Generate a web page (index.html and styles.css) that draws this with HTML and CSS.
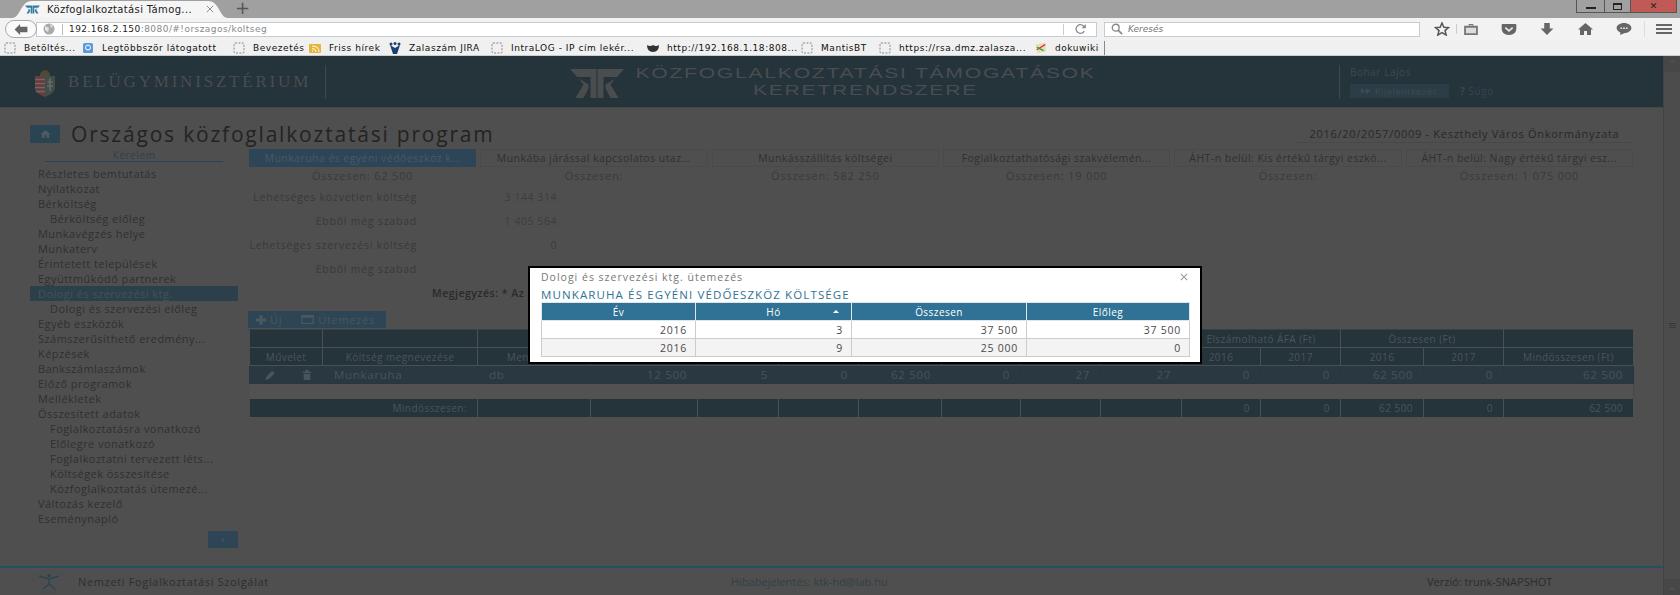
FILE: index.html
```html
<!DOCTYPE html>
<html lang="hu">
<head>
<meta charset="utf-8">
<title>Közfoglalkoztatási Támogatások</title>
<link rel="stylesheet" href="styles.css">
</head>
<body>
<svg class="defs" width="0" height="0" aria-hidden="true">
  <symbol id="kk" viewBox="0 0 54 29">
    <path d="M0 0H26.500V29H20.500V8H7Z"/><path d="M54 0H27.500V29H33.500V8H47Z"/>
    <path d="M9 9.500L18.500 15.500V19.500L13.500 29H5.500L13.500 15.500Z"/><path d="M45 9.500L35.500 15.500V19.500L40.500 29H48.500L40.500 15.500Z"/>
  </symbol>
  <symbol id="ph" viewBox="0 0 12 12">
    <rect x="1" y="1" width="10" height="10" rx="1" fill="none" stroke="#888" stroke-dasharray="2 1.4"/>
  </symbol>
</svg>

<div class="tabbar">
  <div class="tab">
    <svg class="fav"><use href="#kk"/></svg>
    <span class="tab-title">Közfoglalkoztatási Támog...</span>
    <svg class="tab-x" viewBox="0 0 10 10"><path d="M1 1L9 9M9 1L1 9" stroke="#777" fill="none"/></svg>
  </div>
  <span class="newtab">+</span>
  <div class="winbtns">
    <span class="winbtn win-min"><i></i></span>
    <span class="winbtn win-max"><i></i></span>
    <span class="winbtn win-close">✕</span>
  </div>
</div>

<div class="navbar">
  <span class="back">
    <svg viewBox="0 0 14 12" width="14" height="11"><path d="M0 6L6 0V3H14V9H6V12Z" fill="#666"/></svg>
  </span>
  <div class="urlbox">
    <svg class="globe" viewBox="0 0 12 12" width="12" height="12"><circle cx="6" cy="6" r="5.5" fill="#aaa"/><path d="M2 3L6 5L5 9L2 7ZM7 1L10 3L8 5Z" fill="#e4e4e4"/></svg>
    <span class="urlsep"></span>
    <span class="url"><b>192.168.2.150</b>:8080/#!orszagos/koltseg</span>
    <span class="reload">
      <svg viewBox="0 0 14 12" width="12" height="10"><path d="M12 3.5A5.2 5.2 0 1 0 12 8.5" fill="none" stroke="#888" stroke-width="1.5"/><path d="M14 0V5H9Z" fill="#888"/></svg>
    </span>
  </div>
  <div class="searchbox">
    <svg viewBox="0 0 14 14" width="12" height="12"><circle cx="5.5" cy="5.5" r="4" fill="none" stroke="#888" stroke-width="1.6"/><path d="M8.5 8.5L13 13" stroke="#888" stroke-width="2"/></svg>
    <span>Keresés</span>
  </div>
  <div class="navicons">
    <svg class="ni-star" viewBox="0 0 16 15" width="16" height="14"><path d="M8 1L10 5.700L15 6L11.200 9.200L12.500 14L8 11.300L3.500 14L4.800 9.200L1 6L6 5.700Z" fill="none" stroke="#555" stroke-width="1.600"/></svg>
    <span class="ni-sep"></span>
    <svg class="ni-case" viewBox="0 0 15 12" width="14" height="11"><path d="M0 2H5V0H10V2H15V12H0Z" fill="#777"/><path d="M6 1H9V2H6ZM2 4H13V10H2Z" fill="#ddd"/></svg>
    <svg class="ni-pocket" viewBox="0 0 16 12" width="16" height="11"><path d="M1 0H15Q16 0 16 1V5Q16 12 8 12Q0 12 0 5V1Q0 0 1 0Z" fill="#666"/><path d="M4 4L8 7.500L12 4" fill="none" stroke="#eee" stroke-width="1.800"/></svg>
    <svg class="ni-down" viewBox="0 0 14 13" width="14" height="12"><path d="M4 0H10V6H14L7 13L0 6H4Z" fill="#666"/></svg>
    <svg class="ni-home" viewBox="0 0 15 12" width="15" height="12"><path d="M7.500 0L15 6.500H13V12H9V8H6V12H2V6.500H0Z" fill="#666"/></svg>
    <svg class="ni-chat" viewBox="0 0 16 13" width="16" height="12"><path d="M8 0C12.500 0 16 2.500 16 5.500S12.500 11 8 11L4 13V10.300C1.600 9.300 0 7.500 0 5.500C0 2.500 3.500 0 8 0Z" fill="#666"/><path d="M4 5H6V6.500H4ZM7 5H9V6.500H7ZM10 5H12V6.500H10Z" fill="#ddd"/></svg>
    <span class="ni-sep2"></span>
    <span class="burger"><i></i><i></i><i></i></span>
  </div>
</div>

<div class="bookmarks">
  <span class="bm bm1"><svg class="bi"><use href="#ph"/></svg>Betöltés...</span>
  <span class="bm bm2"><svg class="bi" viewBox="0 0 12 12"><rect x="1" y="1" width="10" height="10" rx="1.500" fill="#5b9bd8"/><circle cx="6" cy="5.500" r="2.500" fill="none" stroke="#fff"/></svg>Legtöbbször látogatott</span>
  <span class="bm bm3"><svg class="bi"><use href="#ph"/></svg>Bevezetés</span>
  <span class="bm bm4"><svg class="bi" viewBox="0 0 12 12"><rect y="2" width="12" height="9" rx="1" fill="#e8b53c"/><path d="M3 9h1M3 6.500Q7 6.500 7 10M3 4Q10 4 10 10" fill="none" stroke="#fff"/></svg>Friss hírek</span>
  <span class="bm bm5"><svg class="bi" viewBox="0 0 12 12"><circle cx="2" cy="2" r="1.500" fill="#1d3f6e"/><circle cx="10" cy="2" r="1.500" fill="#1d3f6e"/><circle cx="6" cy="1.500" r="1.500" fill="#1d3f6e"/><path d="M1 3L6 6L11 3L8 12H4Z" fill="#1d3f6e"/></svg>Zalaszám JIRA</span>
  <span class="bm bm6"><svg class="bi"><use href="#ph"/></svg>IntraLOG - IP cím lekér...</span>
  <span class="bm bm7"><svg class="bi" viewBox="0 0 12 12"><path d="M0 3Q3 5 6 3Q9 5 12 3Q12 10 6 10Q0 10 0 3Z" fill="#333"/></svg>http://192.168.1.18:808...</span>
  <span class="bm bm8"><svg class="bi"><use href="#ph"/></svg>MantisBT</span>
  <span class="bm bm9"><svg class="bi"><use href="#ph"/></svg>https://rsa.dmz.zalasza...</span>
  <span class="bm bm10"><svg class="bi" viewBox="0 0 14 12"><path d="M1 2L12 0L13 10L3 12Z" fill="#e6dcb8"/><path d="M2 8L12 2" stroke="#d24" stroke-width="1.500"/><path d="M2 5L10 9" stroke="#3a3" stroke-width="1.500"/></svg>dokuwiki</span>
  <span class="bm-end"></span>
</div>

<div class="page">
  <div class="content">
    <header class="topbar">
      <div class="ministry">
        <svg class="crest" viewBox="0 0 22 30" width="22" height="30">
          <path d="M6 7Q11 -1 16 7V9H6Z" fill="#4d4a36"/>
          <path d="M1 9H21V21Q21 26 11 30Q1 26 1 21Z" fill="#3f4f48"/>
          <path d="M1 9H11V30Q1 26 1 21Z" fill="#6b3a3a"/>
          <path d="M1 12.500H11M1 16.500H11M1 20.500H11M2 24.500H11" stroke="#6a6a6a" stroke-width="1.600"/>
          <path d="M16 11V24M13.500 15H18.500M13 19H19" stroke="#6a6a6a" stroke-width="1.500"/>
        </svg>
        <span class="ministry-name">BELÜGYMINISZTÉRIUM</span>
      </div>
      <div class="app">
        <svg class="app-logo"><use href="#kk"/></svg>
        <div class="app-name"><span>KÖZFOGLALKOZTATÁSI TÁMOGATÁSOK</span><span>KERETRENDSZERE</span></div>
      </div>
      <div class="user">
        <div class="user-name">Bohar Lajos</div>
        <div class="user-actions">
          <span class="logout"><svg viewBox="0 0 12 8" width="9" height="6"><path d="M0 1H3V7H0ZM4 3H7V0L12 4L7 8V5H4Z" fill="#3f4d55"/></svg>Kijelentkezés</span>
          <span class="help"><b>?</b> Súgó</span>
        </div>
      </div>
    </header>

    <main class="main">
      <div class="titlerow">
        <span class="homebtn"><svg viewBox="0 0 15 12" width="11" height="8"><path d="M7.500 0L15 6.500H13V12H9V8H6V12H2V6.500H0Z" fill="#4f5b62"/></svg></span>
        <h1 class="title">Országos közfoglalkoztatási program</h1>
        <div class="applicant">2016/20/2057/0009 - Keszthely Város Önkormányzata</div>
      </div>
      <div class="columns">
        <nav class="sidebar">
          <div class="side-head">Kérelem</div>
          <a class="mi">Részletes bemtutatás</a>
          <a class="mi">Nyilatkozat</a>
          <a class="mi">Bérköltség</a>
          <a class="mi sub">Bérköltség előleg</a>
          <a class="mi">Munkavégzés helye</a>
          <a class="mi">Munkaterv</a>
          <a class="mi">Érintetett települések</a>
          <a class="mi">Együttműködő partnerek</a>
          <a class="mi active">Dologi és szervezési ktg.</a>
          <a class="mi sub">Dologi és szervezési előleg</a>
          <a class="mi">Egyéb eszközök</a>
          <a class="mi">Számszerűsíthető eredmény...</a>
          <a class="mi">Képzések</a>
          <a class="mi">Bankszámlaszámok</a>
          <a class="mi">Előző programok</a>
          <a class="mi">Mellékletek</a>
          <a class="mi">Összesített adatok</a>
          <a class="mi sub">Foglalkoztatásra vonatkozó</a>
          <a class="mi sub">Előlegre vonatkozó</a>
          <a class="mi sub">Foglalkoztatni tervezett léts...</a>
          <a class="mi sub">Költségek összesítése</a>
          <a class="mi sub">Közfoglalkoztatás ütemezé...</a>
          <a class="mi">Változás kezelő</a>
          <a class="mi">Eseménynapló</a>
          <div class="collapse-row"><span class="collapse">‹</span></div>
        </nav>
        <section class="panel">
          <div class="cost-tabs">
            <div class="cost-tab"><span class="ct ct-on">Munkaruha és egyéni védőeszköz k...</span><span class="sum">Összesen: 62 500</span></div>
            <div class="cost-tab"><span class="ct">Munkába járással kapcsolatos utaz...</span><span class="sum">Összesen:</span></div>
            <div class="cost-tab"><span class="ct">Munkásszállítás költségei</span><span class="sum">Összesen: 582 250</span></div>
            <div class="cost-tab"><span class="ct">Foglalkoztathatósági szakvélemén...</span><span class="sum">Összesen: 19 000</span></div>
            <div class="cost-tab"><span class="ct">ÁHT-n belül: Kis értékű tárgyi eszkö...</span><span class="sum">Összesen:</span></div>
            <div class="cost-tab"><span class="ct">ÁHT-n belül: Nagy értékű tárgyi esz...</span><span class="sum">Összesen: 1 075 000</span></div>
          </div>
          <div class="frow"><span class="flabel">Lehetséges közvetlen költség</span><span class="fval">3 144 314</span></div>
          <div class="frow"><span class="flabel">Ebből még szabad</span><span class="fval">1 405 564</span></div>
          <div class="frow"><span class="flabel">Lehetséges szervezési költség</span><span class="fval">0</span></div>
          <div class="frow"><span class="flabel">Ebből még szabad</span><span class="fval"></span></div>
          <div class="note">Megjegyzés: * Az</div>
          <div class="toolbar">
            <span class="tool"><svg viewBox="0 0 10 10" width="10" height="10"><path d="M3.500 0H6.500V3.500H10V6.500H6.500V10H3.500V6.500H0V3.500H3.500Z" fill="#4a5860"/></svg>Új</span>
            <span class="tool"><svg viewBox="0 0 14 10" width="13" height="9"><path d="M0 0H14V10H0ZM1.500 3V8.500H12.500V3Z" fill="#4a5860" fill-rule="evenodd"/></svg>Ütemezés</span>
          </div>
          <table class="grid">
            <colgroup>
              <col class="w73"><col class="w155"><col class="w113"><col class="w107"><col class="w81"><col class="w80"><col class="w83"><col class="w79"><col class="w80"><col class="w81"><col class="w79"><col class="w80"><col class="w83"><col class="w80"><col class="w130">
            </colgroup>
            <thead>
              <tr class="h18"><th></th><th></th><th></th><th></th><th></th><th></th><th></th><th></th><th></th><th></th><th colspan="2">Elszámolható ÁFA (Ft)</th><th colspan="2">Összesen (Ft)</th><th></th></tr>
              <tr class="h18"><th>Művelet</th><th>Költség megnevezése</th><th>Mennyiség</th><th></th><th></th><th></th><th></th><th></th><th></th><th></th><th>2016</th><th>2017</th><th>2016</th><th>2017</th><th>Mindösszesen (Ft)</th></tr>
            </thead>
            <tbody>
              <tr class="datarow">
                <td class="ops"><span class="ops-in">
                  <svg viewBox="0 0 12 12" width="11" height="10"><path d="M0 12L1 8L8 1L11 4L4 11Z" fill="#465660"/></svg>
                  <svg viewBox="0 0 10 12" width="10" height="10"><path d="M0 2H3V0H7V2H10V3.500H0ZM1 4.500H9V12H1Z" fill="#465660"/></svg>
                </span></td>
                <td class="tl">Munkaruha</td><td class="tl">db</td><td>12 500</td><td>5</td><td>0</td><td>62 500</td><td>0</td><td>27</td><td>27</td><td>0</td><td>0</td><td>62 500</td><td>0</td><td>62 500</td>
              </tr>
              <tr class="emptyrow"><td colspan="15"></td></tr>
              <tr class="totalrow"><td colspan="2">Mindösszesen:</td><td></td><td></td><td></td><td></td><td></td><td></td><td></td><td></td><td>0</td><td>0</td><td>62 500</td><td>0</td><td>62 500</td></tr>
            </tbody>
          </table>
        </section>
      </div>
    </main>

    <footer class="footer">
      <div class="foot-left">
        <svg class="nfsz" viewBox="0 0 36 24" width="36" height="24">
          <ellipse cx="18" cy="10.500" rx="17" ry="10" fill="none" stroke="#454f54" stroke-dasharray="1.500 1"/>
          <path d="M8 6L18 9L28 6M18 9V14L12 19M18 14L24 19" fill="none" stroke="#2a4452" stroke-width="1.500"/>
          <circle cx="18" cy="5.500" r="1.800" fill="#2a4452"/>
          <text x="18" y="23.500" class="nfsz-t">NFSZ</text>
        </svg>
        <span>Nemzeti Foglalkoztatási Szolgálat</span>
      </div>
      <a class="foot-mid">Hibabejelentés: ktk-hd@lab.hu</a>
      <span class="foot-right">Verzió: trunk-SNAPSHOT</span>
    </footer>
  </div>

  <div class="scrollbar">
    <span class="sb-btn">⌃</span>
    <span class="sb-track"><i class="sb-grip"></i></span>
    <span class="sb-btn">⌄</span>
  </div>

  <div class="modal">
    <div class="modal-head"><span>Dologi és szervezési ktg. ütemezés</span><svg viewBox="0 0 10 10" width="8" height="8"><path d="M1 1L9 9M9 1L1 9" stroke="#999" stroke-width="1.300" fill="none"/></svg></div>
    <div class="modal-sub">MUNKARUHA ÉS EGYÉNI VÉDŐESZKÖZ KÖLTSÉGE</div>
    <table class="mtable">
      <colgroup><col class="m1"><col class="m2"><col class="m3"><col class="m4"></colgroup>
      <thead><tr><th>Év</th><th class="sorted">Hó<i class="caret"></i></th><th>Összesen</th><th>Előleg</th></tr></thead>
      <tbody>
        <tr><td>2016</td><td>3</td><td>37 500</td><td>37 500</td></tr>
        <tr class="alt"><td>2016</td><td>9</td><td>25 000</td><td>0</td></tr>
      </tbody>
    </table>
  </div>
</div>
</body>
</html>
```

FILE: styles.css
```css
* { box-sizing: border-box; }
html, body { margin: 0; padding: 0; }
body {
  width: 1680px;
  height: 595px;
  overflow: hidden;
  display: flex;
  flex-direction: column;
  font-family: "Open Sans", "Liberation Sans", sans-serif;
  background: #4f4f4f;
}
.defs { position: absolute; }

/* browser chrome */
.tabbar {
  height: 18px;
  flex: none;
  background: #a0a0a0;
  display: flex;
  align-items: flex-end;
  padding-left: 12px;
}
.tab {
  width: 216px;
  height: 18px;
  background: #f5f5f5;
  clip-path: path("M0 18C9 18 8 1 20 1L196 1C208 1 207 18 216 18Z");
  display: flex;
  align-items: center;
  padding-left: 13px;
  font: 10px "DejaVu Sans", sans-serif;
  color: #222;
}
.fav { width: 15px; height: 9px; fill: #2f7ca0; flex: none; }
.tab-title { margin-left: 7px; width: 152px; letter-spacing: .35px; white-space: nowrap; overflow: hidden; }
.tab-x { width: 8px; height: 8px; margin-left: 7px; }
.newtab { margin: 0 0 1px 7px; font: 18px/18px "DejaVu Sans", sans-serif; color: #555; }
.winbtns { margin-left: auto; margin-right: 3px; height: 13px; align-self: flex-start; display: flex; border: 1px solid #555; border-top: 0; }
.winbtn { display: flex; align-items: center; justify-content: center; height: 12px; border-right: 1px solid #555; }
.win-min { width: 28px; }
.win-min i { width: 10px; height: 2px; background: #222; margin-top: 4px; }
.win-max { width: 26px; }
.win-max i { width: 9px; height: 7px; border: 1px solid #222; border-top-width: 2px; }
.win-close { width: 45px; border-right: 0; background: #bf5a56; color: #222; font: bold 9px "DejaVu Sans", sans-serif; }

.navbar {
  height: 22px;
  flex: none;
  background: #f2f2f2;
  display: flex;
  align-items: center;
  padding-left: 5px;
  font: 9px "DejaVu Sans", sans-serif;
}
.back {
  width: 32px;
  height: 18px;
  border: 1px solid #aaa;
  border-radius: 10px;
  background: #fafafa;
  display: flex;
  align-items: center;
  justify-content: center;
  flex: none;
  position: relative;
  z-index: 1;
}
.urlbox {
  width: 1061px;
  height: 15px;
  margin-left: -1px;
  background: #fff;
  border: 1px solid #c5cdd4;
  display: flex;
  align-items: center;
  padding-left: 6px;
  flex: none;
}
.urlsep { width: 1px; height: 11px; background: #bbb; margin: 0 6px 0 7px; }
.url { color: #888; letter-spacing: .45px; }
.url b { color: #222; font-weight: 400; }
.reload { margin-left: auto; width: 33px; height: 11px; border-left: 1px solid #ccc; display: flex; align-items: center; justify-content: center; }
.searchbox {
  width: 316px;
  height: 15px;
  margin-left: 7px;
  background: #fff;
  border: 1px solid #c5cdd4;
  display: flex;
  align-items: center;
  gap: 5px;
  padding-left: 6px;
  color: #777;
  font-style: italic;
  flex: none;
}
.navicons { display: flex; align-items: center; flex: 1; padding-left: 14px; position: relative; }
.ni-sep { width: 1px; height: 10px; background: #ccc; margin: 0 7px 0 6px; }
.ni-pocket { margin-left: 23px; }
.ni-down { margin-left: 23px; }
.ni-home { margin-left: 24px; }
.ni-chat { margin-left: 23px; }
.ni-sep2 { width: 1px; height: 16px; background: #ddd; margin: 0 11px 0 12px; }
.burger { display: flex; flex-direction: column; gap: 2px; width: 16px; }
.burger i { height: 2px; background: #666; }

.bookmarks {
  height: 16px;
  flex: none;
  background: #f0f0f0;
  border-bottom: 1px solid #ccc;
  display: flex;
  align-items: center;
  font: 9px "DejaVu Sans", sans-serif;
  color: #111;
  letter-spacing: .55px;
  padding-left: 4px;
}
.bm { display: flex; align-items: center; gap: 8px; white-space: nowrap; flex: none; }
.bi { width: 12px; height: 12px; flex: none; }
.bm1 { width: 78px; }
.bm2 { width: 151px; }
.bm3 { width: 76px; }
.bm4 { width: 80px; }
.bm5 { width: 102px; }
.bm6 { width: 156px; }
.bm7 { width: 154px; }
.bm8 { width: 78px; }
.bm9 { width: 156px; }
.bm10 { width: 69px; }
.bm-end { width: 1px; height: 14px; background: #888; }

/* page, already dimmed by the modal backdrop */
.page {
  flex: 1;
  min-height: 0;
  display: flex;
  position: relative;
  background: #4f4f4f;
}
.content { width: 1663px; flex: none; display: flex; flex-direction: column; }

.topbar {
  height: 52px;
  flex: none;
  background: #25333b;
  border-bottom: 1px solid #46484a;
  display: flex;
  align-items: flex-start;
  padding: 9px 0 0 34px;
  position: relative;
}
.ministry {
  width: 292px;
  height: 34px;
  border-right: 1px solid #40484c;
  display: flex;
  align-items: center;
  flex: none;
}
.crest { flex: none; }
.ministry-name {
  margin-left: 12px;
  font: 17px "Liberation Serif", serif;
  letter-spacing: 2.8px;
  color: #4a4d4e;
  white-space: nowrap;
}
.app { width: 1013px; flex: none; display: flex; padding-left: 244px; align-items: center; }
.app-logo { width: 54px; height: 29px; fill: #4a4d4e; flex: none; margin: 3px 10px 0 0; }
.app-name {
  width: 463px;
  display: flex;
  flex-direction: column;
  align-items: center;
  font: 14.800px/17px "Liberation Sans", sans-serif;
  letter-spacing: 1.2px;
  color: #4a4d4e;
  white-space: nowrap;
  transform: scaleX(1.43);
}
.user {
  height: 34px;
  border-left: 1px solid #3d474c;
  padding-left: 10px;
  flex: 1;
  font-size: 10px;
  color: #3d4a52;
  letter-spacing: .55px;
}
.user-name { height: 19px; line-height: 14px; }
.user-actions { display: flex; align-items: center; gap: 11px; }
.logout {
  width: 99px;
  height: 14px;
  background: #2c3d47;
  display: flex;
  align-items: center;
  gap: 5px;
  padding-left: 11px;
  font-size: 9px;
  letter-spacing: .6px;
}
.help { color: #37464e; }

.main { flex: 1; padding: 17px 30px 0 30px; min-height: 0; }
.titlerow { display: flex; align-items: center; height: 18px; margin-bottom: 6px; }
.homebtn {
  width: 30px;
  height: 18px;
  background: #2b4453;
  display: flex;
  align-items: center;
  justify-content: center;
  flex: none;
}
.title {
  margin: 0 0 0 11px;
  font-size: 21px;
  font-weight: 400;
  line-height: 18px;
  letter-spacing: 1.8px;
  color: #232323;
  white-space: nowrap;
}
.applicant {
  margin-left: auto;
  width: 337px;
  height: 18px;
  border-bottom: 1px solid #484848;
  text-align: center;
  font-size: 11px;
  line-height: 18px;
  letter-spacing: .72px;
  color: #282828;
  white-space: nowrap;
}
.columns { display: flex; gap: 11px; }

.sidebar { width: 208px; flex: none; font-size: 11px; letter-spacing: .45px; color: #303030; }
.side-head {
  width: 178px;
  margin: 0 0 4px 15px;
  height: 13px;
  line-height: 13px;
  border-bottom: 1px solid #2c4452;
  text-align: center;
  font-size: 10px;
  letter-spacing: .6px;
  color: #2b4150;
}
.mi { display: block; height: 15px; line-height: 15px; padding-left: 8px; white-space: nowrap; }
.mi.sub { padding-left: 20px; }
.mi.active { background: #2c404b; color: #435259; }
.collapse-row { display: flex; justify-content: flex-end; margin-top: 5px; }
.collapse {
  width: 30px;
  height: 17px;
  background: #2d4554;
  color: #4f5f68;
  text-align: center;
  line-height: 17px;
  font-size: 10px;
}

.panel { width: 1384px; flex: none; font-size: 11px; letter-spacing: .4px; color: #333; }
.cost-tabs { display: flex; gap: 4px; height: 36px; }
.cost-tab { flex: 1; min-width: 0; display: flex; flex-direction: column; align-items: center; }
.ct {
  width: 100%;
  height: 18px;
  line-height: 17px;
  border: 1px solid #4a4a4a;
  text-align: center;
  font-size: 10.500px;
  letter-spacing: .45px;
  color: #303030;
  white-space: nowrap;
  overflow: hidden;
}
.ct-on { background: #2c4657; border-color: #2c4657; color: #485a64; }
.sum { height: 18px; line-height: 18px; font-size: 11px; letter-spacing: .8px; color: #3a3a3a; white-space: nowrap; }
.frow { display: flex; height: 24px; align-items: center; color: #393939; }
.flabel { width: 168px; text-align: right; white-space: nowrap; flex: none; font-size: 10.500px; letter-spacing: .78px; }
.fval { width: 140px; text-align: right; flex: none; font-size: 10.500px; color: #3d3d3d; letter-spacing: .55px; }
.note { height: 24px; line-height: 24px; padding-left: 183px; font-weight: 600; font-size: 10.500px; letter-spacing: .5px; color: #2a2a2a; }
.toolbar {
  width: 138px;
  height: 17px;
  margin: 6px 0 1px -1px;
  background: #2e4555;
  display: flex;
  align-items: center;
  gap: 19px;
  padding-left: 8px;
  color: #475761;
  font-size: 11px;
  letter-spacing: .7px;
}
.tool { display: flex; align-items: center; gap: 4px; }

.grid { table-layout: fixed; width: 1384px; border-collapse: collapse; font-size: 10px; letter-spacing: .45px; }
.w73 { width: 73px; } .w155 { width: 155px; } .w113 { width: 113px; } .w107 { width: 107px; }
.w81 { width: 81px; } .w80 { width: 80px; } .w83 { width: 83px; } .w79 { width: 79px; } .w130 { width: 130px; }
.grid th {
  background: #25333b;
  border: 1px solid #4b4f51;
  border-top: 1px solid #33414a;
  color: #4b5559;
  font-weight: 400;
  text-align: center;
  padding: 0;
  line-height: 12px;
  white-space: nowrap;
  overflow: hidden;
}
.h18 { height: 18px; }
.grid td { padding: 0 10px 0 0; text-align: right; line-height: 12px; white-space: nowrap; overflow: hidden; }
.datarow { height: 18px; background: #2a3941; color: #46545b; font-size: 11.500px; letter-spacing: .7px; }
.datarow td { border: 1px solid #28363e; border-top: 0; }
.grid td.tl { text-align: left; padding-left: 11px; }
.grid td.ops { padding: 0; }
.ops-in { display: flex; justify-content: space-between; padding: 1px 10px 0 15px; }
.emptyrow { height: 15px; background: #525252; }
.emptyrow td { border-right: 1px solid #484848; }
.totalrow { height: 18px; background: #25333b; color: #4b5559; }
.totalrow td { border: 1px solid #4b4f51; border-top: 0; border-bottom: 0; }

.footer {
  height: 29px;
  flex: none;
  border-top: 2px solid #25505f;
  display: flex;
  align-items: center;
  padding-left: 31px;
  font-size: 11px;
  letter-spacing: .65px;
  color: #2e2e2e;
}
.foot-left { width: 700px; flex: none; display: flex; align-items: center; gap: 11px; }
.nfsz { flex: none; }
.nfsz-t { font: 5px "Liberation Sans", sans-serif; fill: #3d4a50; text-anchor: middle; }
.foot-mid { width: 696px; flex: none; color: #323f46; letter-spacing: 0; font-size: 11px; }
.foot-right { letter-spacing: 0; font-size: 11px; color: #2c2c2c; white-space: nowrap; }

.scrollbar {
  width: 17px;
  flex: none;
  background: #4c4c4c;
  border-left: 1px solid #424242;
  display: flex;
  flex-direction: column;
  color: #5c5c5c;
  font: 9px/16px "DejaVu Sans", sans-serif;
  text-align: center;
}
.sb-btn { height: 16px; flex: none; background: #474747; }
.sb-track { flex: 1; display: flex; align-items: center; justify-content: center; }
.sb-grip { width: 7px; height: 5px; border-top: 1px solid #3a3a3a; border-bottom: 1px solid #3a3a3a; background: linear-gradient(#3a3a3a,#3a3a3a) center/100% 1px no-repeat; }

/* modal */
.modal {
  position: absolute;
  left: 528px;
  top: 210px;
  width: 674px;
  height: 98px;
  background: #fff;
  border: 2px solid #000;
  padding: 0 11px;
  font-size: 10.500px;
  letter-spacing: .35px;
  color: #555;
}
.modal-head {
  height: 18px;
  display: flex;
  align-items: center;
  justify-content: space-between;
  padding: 0 1px 0 0;
  color: #777;
  font-size: 10.500px;
  letter-spacing: 1px;
}
.modal-sub { height: 12px; line-height: 12px; margin: 3px 0 1px; font-size: 11.500px; letter-spacing: 1.12px; color: #2f7296; white-space: nowrap; }
.mtable { table-layout: fixed; width: 648px; border-collapse: collapse; }
.m1 { width: 154px; } .m2 { width: 156px; } .m3 { width: 175px; } .m4 { width: 163px; }
.mtable th {
  height: 18px;
  padding: 0;
  background: #2f7296;
  border: 1px solid #dfe6ea;
  color: #fff;
  font-weight: 400;
  position: relative;
  font-size: 10px;
  letter-spacing: .45px;
}
.mtable td { height: 18px; padding: 0 8px 0 0; text-align: right; border: 1px solid #ccc; font-size: 10.500px; letter-spacing: .75px; color: #4a4a4a; }
.mtable .alt td { background: #f3f3f3; }
.caret {
  position: absolute;
  right: 12px;
  top: 7px;
  border: 3px solid transparent;
  border-top: 0;
  border-bottom: 3px solid #fff;
}
```
